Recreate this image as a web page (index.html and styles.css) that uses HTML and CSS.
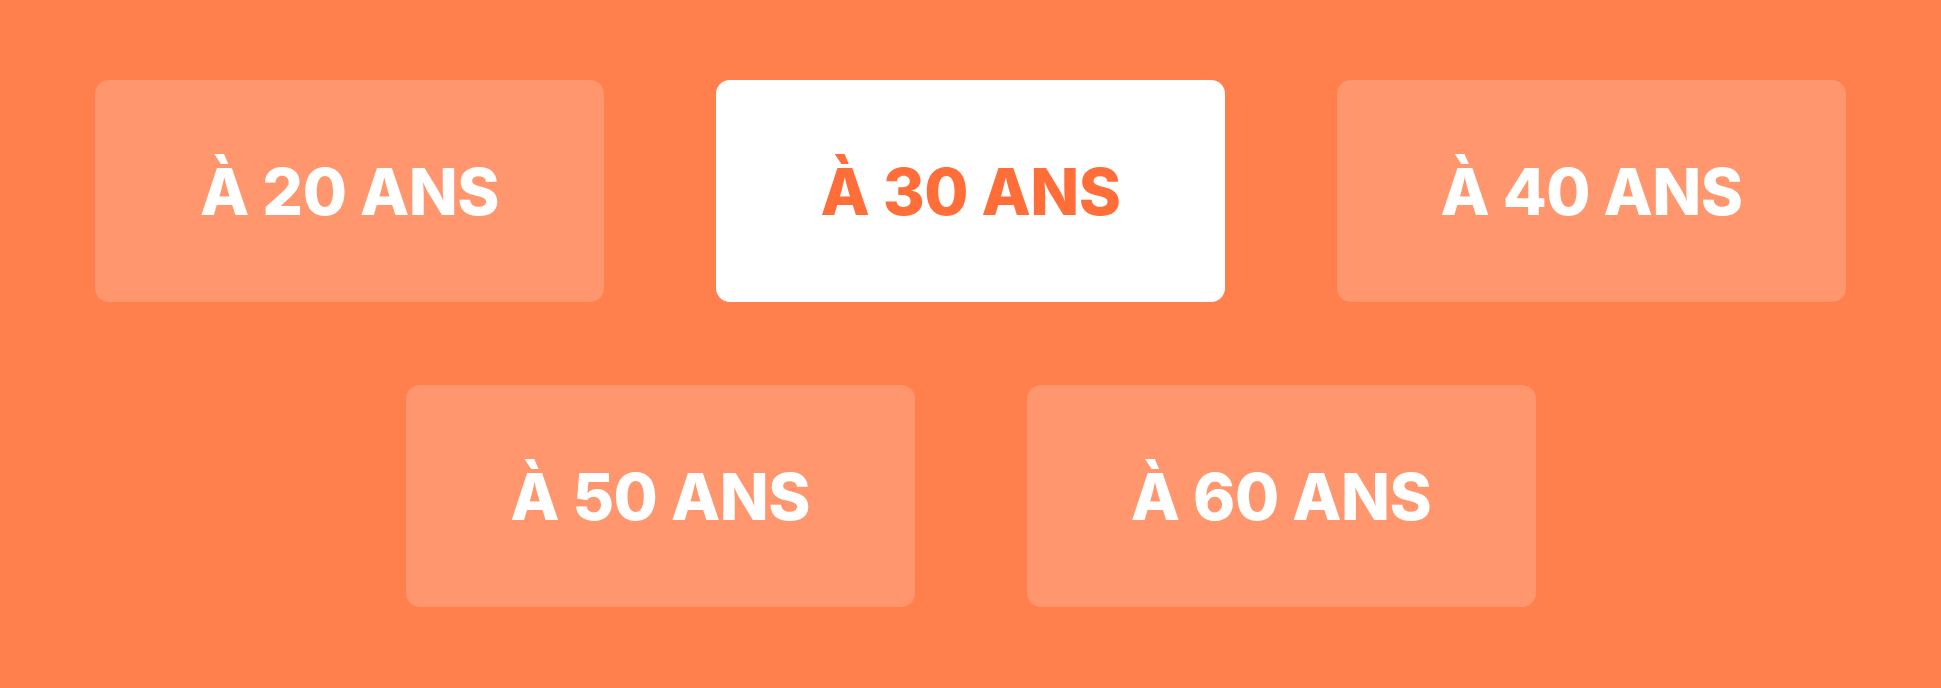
FILE: index.html
```html
<!DOCTYPE html>
<html lang="fr">
<head>
    <meta charset="UTF-8">
    <meta name="viewport" content="width=device-width, initial-scale=1.0">
    <title>Âges</title>
    <link rel="stylesheet" href="styles.css">
</head>
<body>
    <div class="ages">
        <button class="age">À 20 ANS</button>
        <button class="age active">À 30 ANS</button>
        <button class="age">À 40 ANS</button>
        <button class="age">À 50 ANS</button>
        <button class="age">À 60 ANS</button>
    </div>
</body>
</html>
```

FILE: styles.css
```css
html, body {
    margin: 0;
    height: 100%;
}
body {
    background-color: #ff7f4d;
    font-family: Inter, 'Liberation Sans', Arial, sans-serif;
}
.ages {
    display: flex;
    flex-wrap: wrap;
    justify-content: center;
    gap: 83px 112px;
    padding: 80px 0;
}
.age {
    width: 509px;
    height: 222px;
    border: none;
    border-radius: 14px;
    background-color: rgba(255, 255, 255, 0.18);
    color: #fff;
    font-family: inherit;
    font-size: 64px;
    font-weight: 800;
    letter-spacing: -0.5px;
    cursor: pointer;
}
.age.active {
    background-color: #fff;
    color: #ff6d38;
}
```
